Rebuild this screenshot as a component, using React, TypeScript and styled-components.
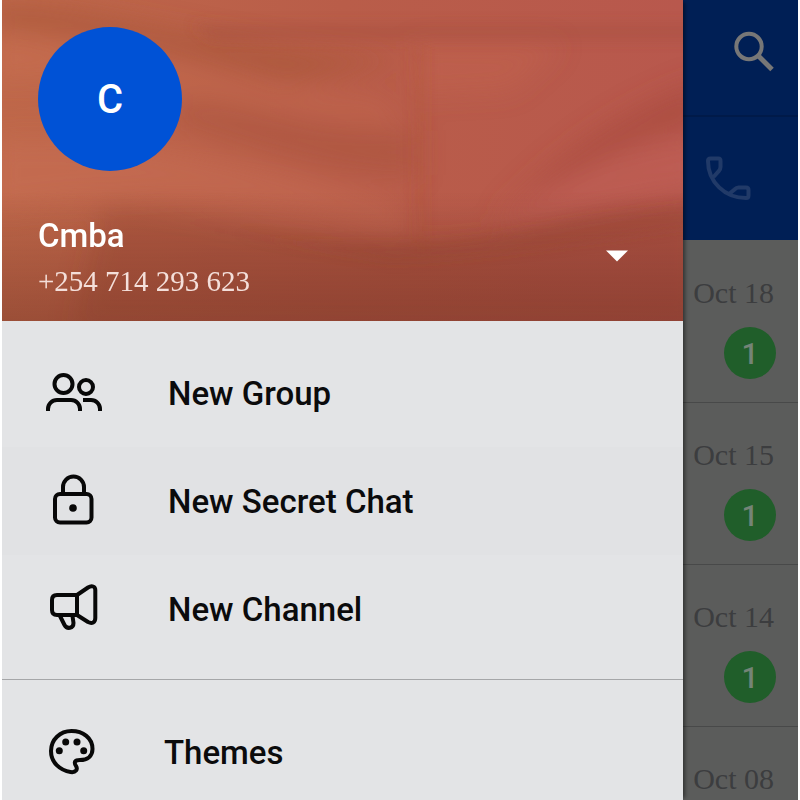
import React from 'react';
import styled, { createGlobalStyle } from 'styled-components';

const sans = 'Roboto, "Liberation Sans", sans-serif';
const serif = '"Liberation Serif", serif';

const GlobalStyle = createGlobalStyle`
  *, *::before, *::after { box-sizing: border-box; }
  body { margin: 0; background: #fff; }
  button { border: 0; margin: 0; padding: 0; background: none; font: inherit; color: inherit; cursor: pointer; }
`;

const Screen = styled.div`
  display: grid;
  grid-template-columns: minmax(0, 1fr) 115px;
  height: 100vh;
  padding: 0 2px;
  overflow: hidden;
  font-family: ${sans};
`;

const Drawer = styled.aside`
  z-index: 1;
  min-height: 0;
  background: #e3e4e6;
  box-shadow: 4px 0 4px -2px rgba(0, 0, 0, 0.45);
`;

const Profile = styled.header`
  position: relative;
  display: flex;
  flex-direction: column;
  align-items: flex-start;
  padding: 27px 36px 20px;
  color: #fff;
`;

const Cover = styled.svg`
  position: absolute;
  inset: 0;
  width: 100%;
  height: 100%;
`;

const Avatar = styled.div`
  position: relative;
  display: flex;
  align-items: center;
  justify-content: center;
  width: 144px;
  height: 144px;
  border-radius: 50%;
  background: #0052d6;
  font-size: 40px;
  font-weight: 500;
`;

const Account = styled.div`
  position: relative;
  display: flex;
  align-items: center;
  justify-content: space-between;
  width: 100%;
  margin-top: 43px;
`;

const Name = styled.div`
  font-size: 33px;
  line-height: 44px;
  font-weight: 500;
`;

const Phone = styled.div`
  padding-top: 3px;
  font-family: ${serif};
  font-size: 29px;
  line-height: 40px;
  color: #f4dfda;
`;

const Expand = styled.button`
  display: flex;
  align-items: center;
  justify-content: center;
  width: 60px;
  height: 60px;
  margin-bottom: 4px;
`;

const Menu = styled.nav<{ $divided?: boolean }>`
  display: flex;
  flex-direction: column;
  padding: 18px 0 16px;
  border-top: ${p => (p.$divided ? '1px solid #a5a6a8' : '0')};
`;

const MenuItem = styled.button<{ $active?: boolean; $compact?: boolean }>`
  && {
    display: flex;
    align-items: center;
    gap: ${p => (p.$compact ? '58px' : '62px')};
    height: 108px;
    padding: 0 40px;
    background: ${p => (p.$active ? '#e1e2e4' : 'transparent')};
    color: #0b0b0c;
    font-size: 33px;
    font-weight: 500;
    text-align: left;
  }
`;

const LineIcon = styled.svg`
  flex: none;
  width: 64px;
  height: 64px;
  fill: none;
  stroke: #080808;
  stroke-width: 4;
  stroke-linejoin: round;
`;

const Backdrop = styled.main`
  display: flex;
  flex-direction: column;
  min-height: 0;
  background: #5b5c5b;
`;

const TopBar = styled.div`
  display: flex;
  flex: none;
  justify-content: flex-end;
  height: 117px;
  padding: 25px 17px 0 0;
  background: #001f55;
  border-bottom: 2px solid #001a49;
`;

const Tabs = styled.div`
  display: flex;
  flex: none;
  justify-content: flex-end;
  height: 123px;
  padding: 33px 42px 0 0;
  background: #001f55;
`;

const IconButton = styled.button`
  display: flex;
  align-self: flex-start;
`;

const ChatRow = styled.div`
  display: flex;
  flex: none;
  flex-direction: column;
  align-items: flex-end;
  gap: 18px;
  height: 162px;
  padding: 37px 22px 0 0;
  box-shadow: 0 1px #484949;
`;

const ChatDate = styled.time`
  padding-right: 2px;
  font-family: ${serif};
  font-size: 30px;
  line-height: 32px;
  white-space: nowrap;
  color: #3c3d3f;
`;

const Badge = styled.span`
  display: flex;
  align-items: center;
  justify-content: center;
  width: 52px;
  height: 52px;
  border-radius: 50%;
  background: #205e2a;
  color: #748477;
  font-size: 30px;
  font-weight: 500;
`;

const Fabric = () => (
  <Cover viewBox="0 0 681 321" preserveAspectRatio="none" aria-hidden="true">
    <defs>
      <linearGradient id="cloth" x1="0" y1="0" x2="1" y2="0">
        <stop offset="0" stopColor="#bf684a" />
        <stop offset="0.5" stopColor="#b95d49" />
        <stop offset="1" stopColor="#b8584d" />
      </linearGradient>
      <linearGradient id="shade" x1="0" y1="0" x2="0" y2="1">
        <stop offset="0.6" stopColor="#6a2c1e" stopOpacity="0" />
        <stop offset="0.86" stopColor="#6a2c1e" stopOpacity="0.28" />
        <stop offset="1" stopColor="#6a2c1e" stopOpacity="0.42" />
      </linearGradient>
      <filter id="soft" x="-20%" y="-60%" width="140%" height="220%">
        <feGaussianBlur stdDeviation="13" />
      </filter>
      <filter id="crisp" x="-20%" y="-60%" width="140%" height="220%">
        <feGaussianBlur stdDeviation="6" />
      </filter>
    </defs>
    <rect width="681" height="321" fill="url(#cloth)" />
    <g filter="url(#soft)">
      <path d="M-10 5C120 8 150 40 400 60L290 80C180 58 150 38 -10 26Z" fill="#a95538" opacity="0.75" />
      <path d="M170 102C240 98 320 140 415 130V175C330 175 250 145 170 125Z" fill="#a8523b" opacity="0.5" />
      <path d="M-10 38C80 40 100 70 380 105L400 122C270 105 120 65 -10 80Z" fill="#cb7055" opacity="0.45" />
      <path d="M-10 140C120 135 190 150 400 205V230C240 195 150 190 -10 210Z" fill="#ca7058" opacity="0.4" />
      <path d="M100 205C210 205 280 245 420 240C530 240 560 200 700 200V330H70Z" fill="#8f432e" opacity="0.3" />
      <path d="M500 215C560 150 620 110 700 80V125C630 140 590 165 500 215Z" fill="#a64a3e" opacity="0.6" />
      <path d="M500 215C570 175 620 150 700 135V190C610 200 560 215 500 225Z" fill="#c4625a" opacity="0.45" />
      <path d="M412 45H560L510 90L412 95Z" fill="#c6674f" opacity="0.35" />
    </g>
    <g filter="url(#crisp)">
      <path d="M190 24H700V40H210Z" fill="#a44f3c" opacity="0.4" />
      <path d="M409 45C414 120 412 190 414 252H424V45Z" fill="#a85039" opacity="0.2" />
      <path d="M200 228C320 252 450 245 520 230C590 215 630 212 700 204V225C590 242 480 258 390 262Z" fill="#984531" opacity="0.25" />
    </g>
    <rect width="681" height="321" fill="url(#shade)" />
  </Cover>
);

const GroupIcon = () => (
  <LineIcon viewBox="0 0 64 64" aria-hidden="true">
    <circle cx="21.5" cy="23" r="9" />
    <circle cx="44" cy="26" r="7" />
    <path d="M6 50v-2a9 9 0 0 1 9-9h14a9 9 0 0 1 9 9v2M41 39h8a9 9 0 0 1 9 9v2" />
  </LineIcon>
);

const LockIcon = () => (
  <LineIcon viewBox="0 0 64 64" aria-hidden="true">
    <rect x="13" y="25" width="36.5" height="28.5" rx="5" />
    <path d="M21 25V18a10.5 10.5 0 0 1 21 0V25" />
    <circle cx="31" cy="39" r="3.8" fill="#080808" stroke="none" />
  </LineIcon>
);

const ChannelIcon = () => (
  <LineIcon viewBox="0 0 64 64" aria-hidden="true">
    <path d="M35 18H15Q10 18 10 23V33Q10 38 15 38H35Z" />
    <path d="M35 18L46 10.5C50 8 53.300 9.500 53.300 13V41C53.300 45.500 50 47 46 45L35 38" />
    <path d="M18 39L22.500 48C25 52.500 31.500 51.500 31.500 46L30.500 39" />
  </LineIcon>
);

const PaletteIcon = () => (
  <LineIcon viewBox="0 0 64 64" aria-hidden="true">
    <path d="M29.5 11C18 11 9 19.5 9 31C9 43 18.5 50.500 28.500 52C34 52.800 36 49.500 34 46C31.500 42 33 40 38 40C45.500 40 50.500 36 50.500 29C50.500 18 41 11 29.500 11Z" />
    <g fill="#080808" stroke="none">
      <circle cx="17.3" cy="30.7" r="3.5" />
      <circle cx="23.7" cy="22" r="3.5" />
      <circle cx="35" cy="22" r="3.5" />
      <circle cx="41.7" cy="30.7" r="3.5" />
    </g>
  </LineIcon>
);

const actions = [
  { label: 'New Group', Icon: GroupIcon },
  { label: 'New Secret Chat', Icon: LockIcon, active: true },
  { label: 'New Channel', Icon: ChannelIcon },
];

const chats = [
  { date: 'Oct 18', unread: 1 },
  { date: 'Oct 15', unread: 1 },
  { date: 'Oct 14', unread: 1 },
  { date: 'Oct 08', unread: 0 },
];

export default function App() {
  return (
    <>
      <GlobalStyle />
      <Screen>
        <Drawer>
          <Profile>
            <Fabric />
            <Avatar>C</Avatar>
            <Account>
              <div>
                <Name>Cmba</Name>
                <Phone>+254 714 293 623</Phone>
              </div>
              <Expand aria-label="Show accounts">
                <svg width="22" height="12" viewBox="0 0 22 12" aria-hidden="true">
                  <path d="M0 0.5H22L11 11.5Z" fill="#fff" />
                </svg>
              </Expand>
            </Account>
          </Profile>
          <Menu aria-label="Create">
            {actions.map(({ label, Icon, active }) => (
              <MenuItem key={label} $active={active}>
                <Icon />
                {label}
              </MenuItem>
            ))}
          </Menu>
          <Menu $divided aria-label="Appearance">
            <MenuItem $compact>
              <PaletteIcon />
              Themes
            </MenuItem>
          </Menu>
        </Drawer>
        <Backdrop>
          <TopBar>
            <IconButton aria-label="Search">
              <svg width="54" height="54" viewBox="0 0 54 54" fill="none" stroke="#777" aria-hidden="true">
                <circle cx="22" cy="21.5" r="12.7" strokeWidth="4" />
                <path d="M31.5 31L45 44.5" strokeWidth="5" />
              </svg>
            </IconButton>
          </TopBar>
          <Tabs>
            <IconButton aria-label="Calls">
              <svg width="56" height="56" viewBox="0 0 56 56" fill="none" stroke="#213a68" strokeWidth="4" aria-hidden="true">
                <path d="M13.5 27L18.5 21.5Q20.5 19.5 20.5 17V11Q20.5 8.5 18.5 8.5H10.5Q8 8.5 8 11C8 32 25 48 46 48Q48.5 48 48.5 45.5V40Q48.5 37.5 46 37.5H38.5Q36.5 37.5 34.5 39.5L29 44" />
              </svg>
            </IconButton>
          </Tabs>
          {chats.map(chat => (
            <ChatRow key={chat.date}>
              <ChatDate>{chat.date}</ChatDate>
              {chat.unread > 0 && <Badge>{chat.unread}</Badge>}
            </ChatRow>
          ))}
        </Backdrop>
      </Screen>
    </>
  );
}
